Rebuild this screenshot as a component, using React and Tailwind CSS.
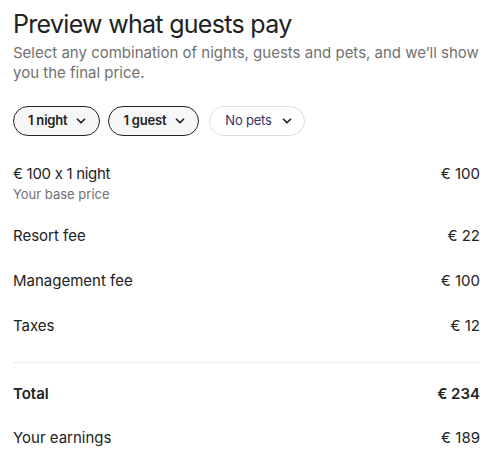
import { ChevronDown } from 'lucide-react';

const pills = [
  { label: '1 night', active: true },
  { label: '1 guest', active: true },
  { label: 'No pets', active: false },
];

const fees = [
  { label: 'Resort fee', value: '€ 22' },
  { label: 'Management fee', value: '€ 100' },
  { label: 'Taxes', value: '€ 12' },
];

export default function App() {
  return (
    <div className="min-h-[467px] bg-white pl-[13px] pr-4 pt-[9px] font-['Inter',sans-serif] text-[#222222] [font-feature-settings:'calt'_0]">
      <h1 className="text-[25px] leading-[30px] font-normal tracking-[-0.7px]">Preview what guests pay</h1>
      <p className="mt-[4px] text-[15px] leading-5 text-[#717171]">
        Select any combination of nights, guests and pets, and we’ll show you the final price.
      </p>

      <div className="mt-[23px] flex gap-2">
        {pills.map((pill) => (
          <button
            key={pill.label}
            className={
              pill.active
                ? 'flex h-[30px] items-center gap-[7px] rounded-full border-[1.5px] border-[#222222] bg-[#f7f7f7] pl-[14px] pr-[11px] text-[13px] font-semibold tracking-[-0.2px] text-[#222222]'
                : 'ml-[2px] flex h-[30px] items-center gap-[8px] rounded-full border border-[#dddddd] bg-white pl-[15px] pr-[10px] text-[13px] font-normal tracking-[-0.2px] text-[#3b2f66]'
            }
          >
            {pill.label}
            <ChevronDown size={14} strokeWidth={3} className="text-[#222222]" />
          </button>
        ))}
      </div>

      <div className="mt-[28px] text-[15px] leading-5">
        <div className="flex justify-between">
          <span className="tracking-[-0.3px]">€ 100 x 1 night</span>
          <span>€ 100</span>
        </div>
        <div className="text-[13px] leading-5 text-[#717171]">Your base price</div>

        <div className="mt-[22px] flex flex-col gap-[25px]">
          {fees.map((fee) => (
            <div key={fee.label} className="flex justify-between">
              <span>{fee.label}</span>
              <span>{fee.value}</span>
            </div>
          ))}
        </div>

        <div className="mt-[26px] border-t border-[#ebebeb]" />

        <div className="mt-[21px] flex justify-between font-semibold">
          <span>Total</span>
          <span>€ 234</span>
        </div>
        <div className="mt-[24px] flex justify-between">
          <span>Your earnings</span>
          <span>€ 189</span>
        </div>
      </div>
    </div>
  );
}
